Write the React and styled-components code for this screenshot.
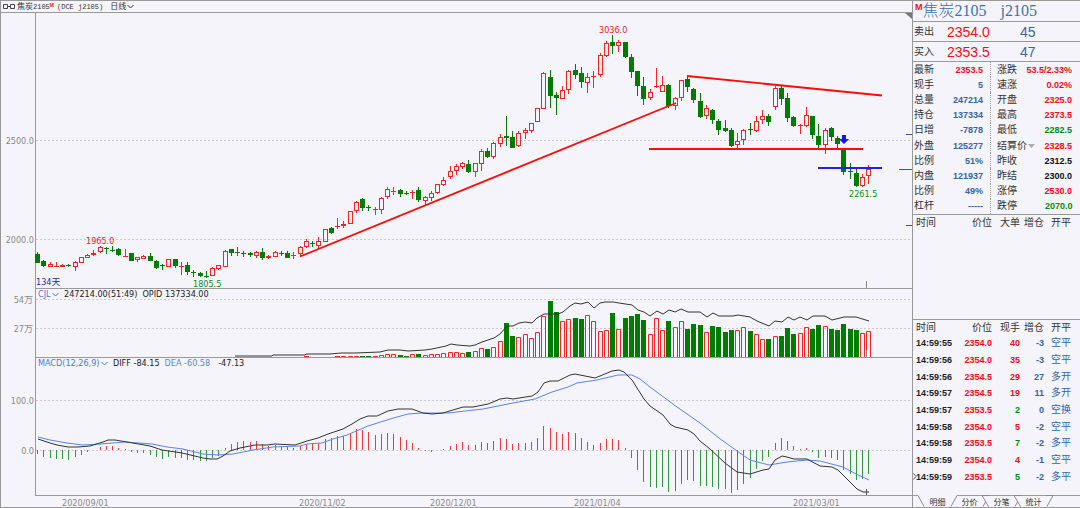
import React from "react";
import styled, { createGlobalStyle } from "styled-components";

const GREEN = "#007d00";
const RED = "#f42424";
const STEP = 6.25;
const FIRST_X = 37.5;

// [direction, high, top of body, bottom of body, low] in chart units
const candles = [
  ["g", 252, 254, 263, 263], ["g", 260, 261, 266, 267], ["r", 262, 264, 267, 267],
  ["r", 262, 266, 267, 267], ["r", 264, 265, 267, 267], ["g", 264, 265, 266, 267],
  ["r", 261, 262, 267, 271], ["r", 257, 257, 263, 263], ["r", 254, 255, 258, 258],
  ["r", 250, 253, 255, 256], ["r", 246, 247, 252, 253], ["g", 247, 248, 249, 254],
  ["g", 246, 250, 251, 252], ["g", 248, 249, 255, 256], ["r", 249, 256, 257, 257],
  ["g", 253, 253, 261, 261], ["r", 257, 257, 260, 262], ["r", 255, 256, 259, 259],
  ["g", 253, 256, 261, 261], ["g", 260, 261, 268, 269], ["g", 264, 265, 266, 270],
  ["r", 259, 259, 267, 267], ["g", 259, 259, 266, 268], ["r", 262, 266, 267, 275],
  ["g", 262, 265, 272, 275], ["g", 270, 272, 273, 277], ["g", 272, 273, 276, 277],
  ["g", 271, 276, 277, 278], ["r", 267, 268, 276, 276], ["r", 265, 265, 269, 270],
  ["r", 250, 251, 267, 267], ["g", 249, 249, 253, 256], ["n", 247, 252, 253, 256],
  ["g", 251, 253, 254, 257], ["g", 252, 253, 255, 257], ["r", 251, 252, 256, 258],
  ["g", 248, 252, 258, 260], ["r", 255, 256, 258, 259], ["r", 251, 252, 257, 257],
  ["g", 251, 253, 254, 256], ["g", 251, 253, 258, 258], ["r", 252, 255, 256, 259],
  ["r", 246, 247, 254, 256], ["r", 239, 241, 247, 248], ["g", 241, 243, 244, 247],
  ["r", 237, 241, 246, 249], ["r", 229, 229, 242, 242], ["g", 227, 228, 233, 234],
  ["r", 218, 226, 227, 229], ["r", 221, 224, 226, 228], ["r", 211, 211, 224, 224],
  ["r", 201, 202, 211, 213], ["g", 198, 199, 208, 211], ["g", 205, 207, 208, 211],
  ["r", 207, 209, 210, 215], ["r", 197, 198, 210, 214], ["r", 187, 189, 197, 199],
  ["r", 187, 191, 192, 195], ["g", 189, 190, 194, 197], ["g", 191, 193, 194, 195],
  ["r", 190, 192, 193, 199], ["g", 187, 190, 200, 202], ["r", 196, 197, 201, 205],
  ["r", 191, 193, 198, 201], ["r", 184, 184, 193, 194], ["r", 177, 180, 185, 186],
  ["r", 166, 171, 177, 179], ["r", 164, 166, 171, 175], ["r", 162, 163, 167, 169],
  ["g", 160, 164, 172, 173], ["r", 163, 163, 172, 177], ["r", 149, 151, 164, 171],
  ["g", 148, 151, 157, 158], ["r", 142, 143, 157, 159], ["r", 134, 137, 144, 147],
  ["g", 116, 136, 138, 146], ["g", 131, 137, 148, 148], ["r", 131, 133, 146, 147],
  ["r", 128, 130, 133, 139], ["r", 123, 123, 131, 133], ["r", 108, 108, 122, 122],
  ["r", 72, 73, 109, 109], ["g", 70, 77, 96, 108], ["g", 92, 95, 98, 115],
  ["r", 86, 90, 99, 99], ["r", 70, 71, 90, 94], ["g", 64, 70, 75, 79],
  ["g", 67, 73, 82, 88], ["r", 73, 77, 83, 93], ["r", 71, 76, 77, 88],
  ["r", 53, 55, 75, 77], ["r", 41, 43, 56, 57], ["g", 35, 42, 46, 54],
  ["r", 40, 42, 46, 52], ["g", 42, 42, 57, 58], ["g", 54, 57, 72, 78],
  ["g", 71, 71, 86, 96], ["g", 77, 86, 99, 105], ["r", 89, 92, 98, 100],
  ["r", 68, 86, 87, 88], ["r", 76, 85, 92, 92], ["g", 84, 85, 106, 108],
  ["r", 97, 98, 106, 110], ["r", 80, 80, 98, 101], ["g", 76, 79, 87, 92],
  ["g", 88, 89, 100, 103], ["g", 93, 101, 117, 118], ["r", 105, 108, 116, 119],
  ["g", 109, 110, 120, 124], ["g", 119, 121, 130, 135], ["g", 120, 128, 131, 132],
  ["g", 128, 130, 146, 147], ["r", 133, 141, 145, 149], ["r", 129, 130, 140, 145],
  ["g", 123, 129, 130, 135], ["r", 116, 121, 131, 132], ["r", 110, 116, 120, 124],
  ["g", 114, 116, 122, 126], ["r", 86, 88, 107, 110], ["g", 86, 88, 99, 105],
  ["g", 93, 98, 118, 122], ["g", 116, 117, 126, 127], ["r", 124, 125, 126, 134],
  ["r", 107, 115, 126, 127], ["g", 116, 116, 135, 139], ["g", 124, 136, 145, 149],
  ["r", 128, 130, 145, 154], ["g", 127, 128, 137, 141], ["g", 136, 138, 144, 150],
  ["g", 149, 149, 172, 175], ["g", 163, 171, 172, 179], ["g", 168, 173, 186, 187],
  ["r", 174, 177, 186, 187], ["r", 165, 169, 176, 184],
];

// top of each volume bar, the first ones are too small to show
const volumeStart = 49;
const volumes = [
  356, 356, 356, 356, 356, 356, 355, 354, 354, 355, 356, 354, 354, 355, 354,
  354, 353, 352, 352, 353, 352, 351, 348, 349, 347, 341, 323, 336, 337, 334,
  338, 332, 316, 301, 312, 321, 319, 318, 319, 315, 321, 331, 330, 313, 329,
  318, 316, 314, 320, 334, 318, 330, 321, 327, 321, 329, 324, 325, 332, 326,
  327, 332, 330, 330, 327, 331, 334, 339, 339, 336, 336, 328, 334, 333, 327,
  329, 325, 326, 329, 330, 324, 329, 330, 333, 331,
];

const histogram = [
  454, 457, 458, 459, 459, 460, 457, 455, 452, 450, 447, 446, 446, 448, 449,
  452, 453, 453, 455, 457, 459, 457, 458, 458, 460, 460, 461, 461, 458, 456,
  448, 444, 442, 441, 442, 441, 444, 446, 445, 446, 447, 448, 446, 444, 443,
  443, 439, 438, 436, 436, 433, 429, 430, 432, 435, 434, 433, 434, 437, 440,
  443, 448, 451, 452, 450, 449, 446, 444, 442, 445, 445, 442, 443, 441, 438,
  439, 444, 443, 443, 442, 438, 426, 428, 432, 434, 432, 433, 438, 442, 445,
  443, 439, 439, 440, 448, 458, 470, 482, 487, 488, 487, 492, 491, 484, 480,
  481, 486, 486, 487, 489, 489, 493, 490, 484, 478, 469, 461, 457, 443, 438,
  441, 446, 449, 448, 452, 458, 457, 458, 460, 470, 474, 480, 479, 474,
];

const openInterest =
  "235,356 272,356 273,355 305,355 306,354 330,354 341,353 355,353 380,352 388,350 400,350 408,351 425,350 432,349 446,346 451,344 457,345 470,346 475,345 482,342 494,338 500,334 507,326 513,326 519,323 525,322 532,323 537,318 544,314 558,314 563,312 570,306 575,303 581,304 588,302 594,308 600,303 605,302 613,302 619,303 632,305 638,310 644,312 650,316 657,311 663,314 669,310 675,312 681,309 688,312 700,312 707,317 713,313 719,316 733,316 738,315 750,317 757,321 769,326 775,321 782,322 788,317 794,320 800,317 807,320 813,316 825,316 832,320 844,317 856,317 869,321";

const diffLine =
  "38,439 50,443 57,445 68,447 78,447 90,446 103,442 108,440 115,440 127,442 150,446 162,450 182,453 203,458 210,459 217,459 223,456 230,451 240,448 255,445 267,445 275,444 295,445 307,441 318,438 328,434 343,429 352,424 360,419 368,416 377,416 388,411 398,409 412,409 423,413 432,414 443,413 463,407 473,407 488,404 500,399 507,398 513,399 532,396 538,392 544,383 550,381 558,381 570,375 575,374 595,378 600,376 612,371 619,370 624,372 632,380 644,399 650,406 663,415 670,424 675,427 688,430 694,434 700,441 710,449 725,463 737,472 750,474 763,470 769,469 775,460 782,456 787,457 794,459 807,459 820,466 832,467 838,470 847,479 857,489 863,492 869,492";

const deaLine =
  "38,437 50,440 67,443 83,445 100,444 125,442 152,444 167,447 183,449 203,454 218,455 233,454 253,450 273,447 300,446 307,444 322,443 333,439 347,435 368,426 390,419 408,414 422,413 448,413 465,411 483,409 513,403 535,399 552,392 568,387 577,383 597,380 618,375 632,375 640,379 650,387 677,407 700,423 719,438 737,451 750,460 769,465 787,462 807,460 820,461 843,467 856,474 869,480";

const dates = [
  [62, "2020/09/01"],
  [299, "2020/11/02"],
  [430, "2020/12/01"],
  [574, "2021/01/04"],
  [793, "2021/03/01"],
];

const quotesLeft = [
  ["最新", "2353.5", "red"],
  ["现手", "5", "blue"],
  ["总量", "247214", "blue"],
  ["持仓", "137334", "blue"],
  ["日增", "-7878", "blue"],
  ["外盘", "125277", "blue"],
  ["比例", "51%", "blue"],
  ["内盘", "121937", "blue"],
  ["比例", "49%", "blue"],
  ["杠杆", "-----", "blue"],
];

const quotesRight = [
  ["涨跌", "53.5/2.33%", "red"],
  ["速涨", "0.02%", "red"],
  ["开盘", "2325.0", "red"],
  ["最高", "2373.5", "red"],
  ["最低", "2282.5", "green"],
  ["结算价", "2328.5", "red"],
  ["昨收", "2312.5", "black"],
  ["昨结", "2300.0", "black"],
  ["涨停", "2530.0", "red"],
  ["跌停", "2070.0", "green"],
];

const trades = [
  ["14:59:55", "2354.0", "40", "red", "-3", "空平"],
  ["14:59:56", "2354.0", "35", "red", "-3", "空平"],
  ["14:59:56", "2354.5", "29", "red", "27", "多开"],
  ["14:59:57", "2354.5", "19", "red", "11", "多开"],
  ["14:59:57", "2353.5", "2", "green", "0", "空换"],
  ["14:59:58", "2354.0", "5", "red", "-2", "空平"],
  ["14:59:58", "2353.5", "7", "green", "-2", "多平"],
  ["14:59:59", "2354.0", "4", "red", "-1", "空平"],
  ["14:59:59", "2353.5", "5", "green", "-2", "多平"],
];

const colors = {
  red: "#fa0a14",
  green: "#008a10",
  blue: "#3465a8",
  black: "#111",
};

const barX = (i) => Math.floor(FIRST_X + STEP * i) + 0.5;

const Chevron = () => (
  <svg width="7" height="5" viewBox="0 0 7 5" fill="none" stroke="currentColor">
    <path d="M0.5 1 L3.5 4 L6.5 1" />
  </svg>
);

const Candle = ({ index, data }) => {
  const [kind, high, top, bottom, low] = data;
  const x = barX(index);
  const color = { g: GREEN, r: RED, n: "#555" }[kind];
  const hollow = kind === "r" && bottom - top > 1;
  return (
    <g stroke={color}>
      {high < top && <path d={`M${x} ${high}V${top}`} />}
      {low > bottom && <path d={`M${x} ${bottom}V${low}`} />}
      {hollow ? (
        <rect x={x - 2} y={top + 0.5} width="4" height={bottom - top - 1} fill="none" />
      ) : (
        <rect
          x={x - 2.5}
          y={top}
          width="5"
          height={bottom - top}
          fill={color}
          stroke="none"
        />
      )}
    </g>
  );
};

const PriceChart = () => (
  <Plot height={275} viewBox="36 13 876 275">
    <GridLine d="M36 140.5H912M36 239.5H912" />
    {candles.map((c, i) => (
      <Candle key={i} index={i} data={c} />
    ))}
    <g fill="none" stroke="#ff0a0a" strokeWidth="1.8">
      <path d="M300 256.5L676 103" />
      <path d="M687 76L882 95.5" />
      <path d="M649 149H863" />
    </g>
    <path d="M818 168H882" stroke="#2020f0" strokeWidth="2" />
    <path d="M842 135h4v4h3l-5 5l-5-5h3z" fill="#1414ff" />
    <path d="M906 134.5H912M899 169.5H912M906 225.5H912" stroke="#3a4fb0" />
    <path d="M866.5 281V288" stroke="#888" />
    <path d="M905 13H912V19z" fill="#777" />
    <ChartText x="599" y="33" fill="#f02020">3036.0</ChartText>
    <ChartText x="86" y="244" fill="#f02020">1965.0</ChartText>
    <ChartText x="193" y="287" fill="#108a20">1805.5</ChartText>
    <ChartText x="849" y="197" fill="#108a20">2261.5</ChartText>
    <ChartText x="36" y="285" fill="#2030a0">134天</ChartText>
  </Plot>
);

const VolumeChart = () => (
  <Plot height={58} viewBox="36 299 876 58">
    <GridLine d="M36 299.5H912M36 328.5H912" />
    {volumes.map((top, i) => {
      const index = i + volumeStart;
      const x = barX(index);
      if (candles[index][0] === "g") {
        return <rect key={i} x={x - 2.5} y={top} width="5" height={357 - top} fill={GREEN} />;
      }
      return (
        <path key={i} d={`M${x - 2} 357V${top + 0.5}H${x + 2}V357`} fill="none" stroke={RED} />
      );
    })}
    <path d="M304 356.5H309M335 356.5H340" stroke={RED} />
    <polyline points={openInterest} fill="none" stroke="#333" />
    <path d="M866.5 350V357" stroke="#888" />
  </Plot>
);

const MacdChart = () => (
  <Plot height={127} viewBox="36 368 876 127">
    <GridLine d="M36 400.5H912M36 450.5H912" />
    {histogram.map((y, i) => (
      <path
        key={i}
        d={`M${barX(i)} 450V${y}`}
        stroke={y > 450 ? "#2f9a3a" : "#f03a3a"}
      />
    ))}
    <polyline points={deaLine} fill="none" stroke="#5b83ec" />
    <polyline points={diffLine} fill="none" stroke="#333" />
    <path d="M866.5 489V495" stroke="#555" />
  </Plot>
);

const Quotes = ({ rows, dropdownOn, divided }) => (
  <QuoteTable $divided={divided}>
    <tbody>
      {rows.map(([label, value, tone], i) => (
        <tr key={i}>
          <th scope="row">
            {label === dropdownOn ? (
              <Picker $tone="#333">
                <select aria-label="价格类型">
                  <option>{label}</option>
                </select>
                <svg width="7" height="4" viewBox="0 0 7 4">
                  <path d="M0 0H7L3.5 4z" fill="#aaa" />
                </svg>
              </Picker>
            ) : (
              label
            )}
          </th>
          <Num $tone={tone}>{value}</Num>
        </tr>
      ))}
    </tbody>
  </QuoteTable>
);

const TradeHead = ({ third }) => (
  <thead>
    <tr>
      <th>时间</th>
      <th>价位</th>
      <th>{third}</th>
      <th>增仓</th>
      <th>开平</th>
    </tr>
  </thead>
);

const TabEdge = ({ d }) => (
  <svg width="7" height="12" viewBox="0 0 7 12" fill="none" stroke="#888">
    <path d={d} />
  </svg>
);

const App = () => {
  return (
    <>
      <GlobalStyle />
      <Page>
        <ChartArea>
          <TitleBar>
            <svg width="12" height="5" viewBox="0 0 12 5" fill="none" stroke="#444">
              <path d="M0.5 0.5H4.5V4.5H0.5zM7.5 0.5H11.5V4.5H7.5zM4 2.5H8" />
            </svg>
            <Contract>
              焦炭<i>2105</i>
              <sup>M</sup>
              <i>(DCE j2105)</i>
            </Contract>
            <Picker $tone="#333">
              <select aria-label="周期">
                <option>日线</option>
              </select>
              <Chevron />
            </Picker>
          </TitleBar>

          <Pane>
            <Axis height={275} viewBox="1 13 34 275">
              <AxisText x="34" y="144">2500.0</AxisText>
              <AxisText x="34" y="243">2000.0</AxisText>
            </Axis>
            <PlotColumn>
              <PriceChart />
            </PlotColumn>
          </Pane>

          <Pane>
            <Axis height={68} viewBox="1 289 34 68">
              <AxisText x="33" y="303">54万</AxisText>
              <AxisText x="33" y="332">27万</AxisText>
            </Axis>
            <PlotColumn>
              <Legend>
                <Picker $tone="#4a78e0">
                  <select aria-label="成交量指标">
                    <option>CJL</option>
                  </select>
                  <Chevron />
                </Picker>
                <span>247214.00(51:49)</span>
                <span>OPID 137334.00</span>
              </Legend>
              <VolumeChart />
            </PlotColumn>
          </Pane>

          <Pane>
            <Axis height={137} viewBox="1 358 34 137">
              <AxisText x="34" y="404">100.0</AxisText>
              <AxisText x="34" y="454">0.0</AxisText>
            </Axis>
            <PlotColumn>
              <Legend>
                <Picker $tone="#4a78e0">
                  <select aria-label="技术指标">
                    <option>MACD(12,26,9)</option>
                  </select>
                  <Chevron />
                </Picker>
                <span>DIFF -84.15</span>
                <Dea>DEA -60.58</Dea>
                <span>-47.13</span>
              </Legend>
              <MacdChart />
            </PlotColumn>
          </Pane>

          <Dates height={11} viewBox="1 496 911 11">
            {dates.map(([x, text]) => (
              <ChartText key={text} x={x} y="506" fill="#8a8a90">
                {text}
              </ChartText>
            ))}
          </Dates>
        </ChartArea>

        <Sidebar>
          <Heading>
            <sup>M</sup>
            <span>焦炭2105</span>
            <span>j2105</span>
          </Heading>
          <BidAsk>
            <span>卖出</span>
            <Price>2354.0</Price>
            <Lots>45</Lots>
          </BidAsk>
          <BidAsk>
            <span>买入</span>
            <Price>2353.5</Price>
            <Lots>47</Lots>
          </BidAsk>
          <QuoteGrid>
            <Quotes rows={quotesLeft} />
            <Quotes rows={quotesRight} dropdownOn="结算价" divided />
          </QuoteGrid>
          <BigTrades>
            <TradeTable>
              <TradeHead third="大单" />
            </TradeTable>
          </BigTrades>
          <Ticks>
            <TradeTable $height="165px">
              <TradeHead third="现手" />
              <tbody>
                {trades.map(([time, price, lots, tone, change, type], i) => (
                  <tr key={i}>
                    <Time>
                      {i === trades.length - 1 && (
                        <Marker width="4" height="7" viewBox="0 0 4 7">
                          <path d="M0.5 0.5L3 3.5L0.5 6.5" fill="none" stroke="#3465a8" />
                        </Marker>
                      )}
                      {time}
                    </Time>
                    <Num $tone="red">{price}</Num>
                    <Num $tone={tone}>{lots}</Num>
                    <Num $tone="blue">{change}</Num>
                    <Kind>{type}</Kind>
                  </tr>
                ))}
              </tbody>
            </TradeTable>
          </Ticks>
          <Tabs role="tablist">
            <TabLead />
            <TabEdge d="M0 0.5L6 11.5" />
            <Tab role="tab" aria-selected="true" $active>明细</Tab>
            <TabEdge d="M7 0.5L1 11.5" />
            <Tab role="tab" aria-selected="false">分价</Tab>
            <TabEdge d="M0 0.5L6.5 11.5M4 6L1 11.5M0 0.5H7" />
            <Tab role="tab" aria-selected="false">分笔</Tab>
            <TabEdge d="M0 0.5L6.5 11.5M4 6L1 11.5M0 0.5H7" />
            <Tab role="tab" aria-selected="false">统计</Tab>
            <TabEdge d="M7 0.5L1 11.5M0 0.5H7" />
            <TabRest />
          </Tabs>
        </Sidebar>
      </Page>
    </>
  );
};

const line = "1px solid #999";

const GlobalStyle = createGlobalStyle`
  * {
    box-sizing: border-box;
  }
  body {
    margin: 0;
    background: #f5f4fa;
    color: #333;
    font-family: "DejaVu Sans Condensed", "Noto Sans CJK SC", sans-serif;
    font-size: 9px;
    line-height: 10px;
  }
  svg {
    display: block;
    flex: none;
  }
  table {
    border-collapse: collapse;
    width: 100%;
  }
  th, td {
    padding: 0;
    font-weight: normal;
  }
`;

const Page = styled.main`
  display: grid;
  grid-template-columns: minmax(0, 1fr) 168px;
  border-bottom: ${line};
`;

const ChartArea = styled.section`
  border-left: ${line};
`;

const TitleBar = styled.header`
  display: flex;
  align-items: center;
  height: 13px;
  padding-left: 2px;
  gap: 2px;
  border-top: ${line};
  border-bottom: ${line};
  font-size: 8px;
`;

const Contract = styled.h1`
  display: flex;
  align-items: center;
  margin: 0 5px 0 0;
  font-size: 8px;
  font-weight: normal;
  i {
    font: 7px/10px "Liberation Mono", monospace;
    white-space: pre;
  }
  sup {
    align-self: flex-start;
    font: bold 5px/6px "Liberation Sans", sans-serif;
    color: #f02020;
    margin-right: 3px;
  }
`;

const Picker = styled.label`
  display: flex;
  align-items: center;
  gap: 1px;
  color: ${(props) => props.$tone};
  select {
    appearance: none;
    border: 0;
    padding: 0;
    background: none;
    color: inherit;
    font: inherit;
    line-height: 10px;
  }
`;

const Pane = styled.div`
  display: grid;
  grid-template-columns: 34px minmax(0, 1fr);
`;

const PlotColumn = styled.div`
  border-left: ${line};
  border-bottom: ${line};
`;

const Plot = styled.svg.attrs({ preserveAspectRatio: "xMinYMin meet" })`
  width: 100%;
  overflow: visible;
`;

const Axis = styled.svg`
  width: 34px;
`;

const Dates = styled.svg.attrs({ preserveAspectRatio: "xMinYMin meet" })`
  width: 100%;
`;

const GridLine = styled.path`
  stroke: #cacace;
  stroke-dasharray: 2 2;
`;

const ChartText = styled.text`
  font-size: 9px;
`;

const AxisText = styled.text`
  font-size: 9px;
  text-anchor: end;
  fill: #88888e;
`;

const Legend = styled.div`
  display: flex;
  gap: 5px;
  height: 10px;
  padding-left: 2px;
  color: #222;
`;

const Dea = styled.span`
  color: #5b83ec;
  margin-right: 3px;
`;

const Sidebar = styled.aside`
  display: flex;
  flex-direction: column;
  border-left: ${line};
  border-top: ${line};
  font-family: "Liberation Sans", "Noto Sans CJK SC", sans-serif;
  font-size: 10px;
`;

const Heading = styled.h2`
  display: flex;
  height: 21px;
  margin: 0;
  padding-left: 2px;
  border-bottom: ${line};
  font: 16px/20px "Liberation Serif", "Noto Sans CJK SC", serif;
  font-weight: 300;
  color: #3c70b4;
  sup {
    font: bold 9px/12px "Liberation Sans", sans-serif;
    color: #f01020;
  }
  span + span {
    margin-left: 14px;
  }
`;

const BidAsk = styled.div`
  display: grid;
  grid-template-columns: 33px 71px 1fr;
  align-items: center;
  height: 20px;
  padding-left: 1px;
  border-bottom: ${line};
`;

const Price = styled.span`
  font-size: 14px;
  color: #fa0a14;
`;

const Lots = styled.span`
  padding-left: 2px;
  font-size: 14px;
  color: #3465a8;
`;

const QuoteGrid = styled.div`
  display: grid;
  grid-template-columns: 77px minmax(0, 1fr);
  height: 153px;
  border-bottom: ${line};
`;

const QuoteTable = styled.table`
  height: 100%;
  table-layout: fixed;
  white-space: nowrap;
  border-left: ${(props) => (props.$divided ? "1px dotted #999" : "0")};
  th {
    width: 28px;
    text-align: left;
    padding-left: ${(props) => (props.$divided ? "6px" : "1px")};
  }
  td {
    padding-right: 7px;
  }
`;

const Num = styled.td`
  text-align: right;
  font-size: 9px;
  font-weight: bold;
  color: ${(props) => colors[props.$tone]};
`;

const BigTrades = styled.div`
  height: 105px;
  border-bottom: ${line};
`;

const Ticks = styled.div`
  flex: 1;
`;

const TradeTable = styled.table`
  table-layout: fixed;
  height: ${(props) => props.$height || "auto"};
  th {
    height: 15px;
    text-align: right;
  }
  th:nth-child(1) {
    width: 50px;
    padding-left: 3px;
    text-align: left;
  }
  th:nth-child(2) {
    width: 29px;
  }
  th:nth-child(3) {
    width: 28px;
  }
  th:nth-child(4) {
    width: 24px;
  }
  th:nth-child(5) {
    padding-left: 7px;
    text-align: left;
  }
  tbody {
    line-height: 16px;
  }
`;

const Time = styled.td`
  position: relative;
  padding-left: 3px;
  font-size: 9px;
  font-weight: bold;
  color: #222;
`;

const Marker = styled.svg`
  position: absolute;
  left: 0;
  top: 5px;
`;

const Kind = styled.td`
  padding-left: 7px;
  color: #3465a8;
`;

const Tabs = styled.div`
  display: flex;
  height: 12px;
`;

const TabLead = styled.div`
  width: 5px;
  border-top: ${line};
`;

const TabRest = styled.div`
  flex: 1;
  border-top: ${line};
`;

const Tab = styled.button`
  width: 25px;
  padding: 0;
  border: 0;
  border-top: ${(props) => (props.$active ? "1px solid transparent" : line)};
  background: none;
  font: 8px/10px "Noto Sans CJK SC", sans-serif;
  color: #333;
  text-align: center;
`;

export default App;
